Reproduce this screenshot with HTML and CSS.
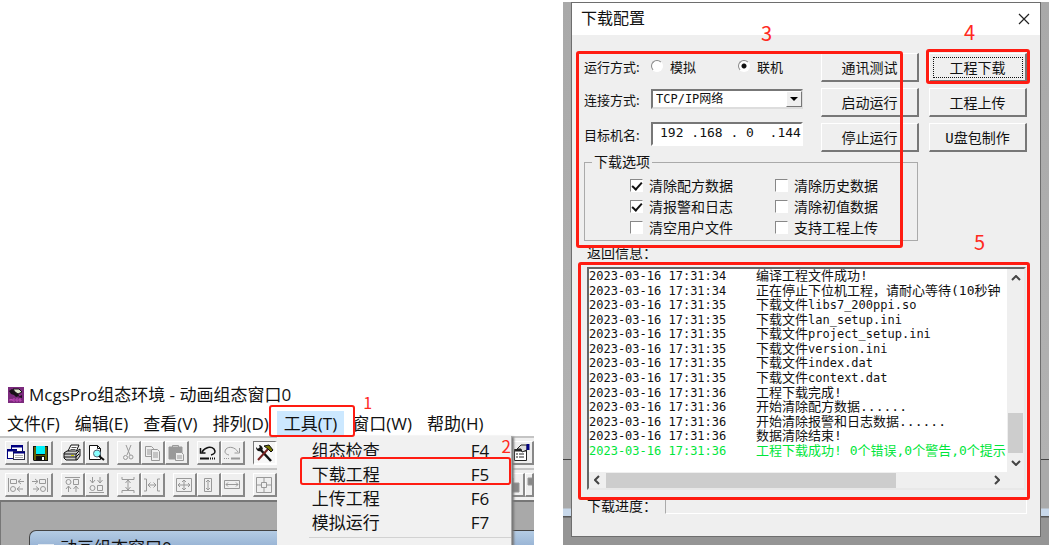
FILE: index.html
```html
<!DOCTYPE html>
<html lang="zh-CN">
<head>
<meta charset="utf-8">
<title>McgsPro组态环境</title>
<link rel="stylesheet" href="styles.css">
</head>
<body>
<main class="page">
<section class="app">
  <header class="app-title">
    <svg class="app-logo" width="18" height="18" viewBox="0 0 18 18"><rect x="1" y="1" width="16" height="16" fill="#7b2a7d"/><path d="M2 5 5 3 8 5 11 7 12 10 9 11 7 9 4 8Z" fill="#181018"/><path d="M6 3 12 3 15 6 11 8 8 6Z" fill="#dfe8cf" stroke="#181018"/><path d="M11 11 15 9V12Z" fill="#201020"/><path d="M3 15V13l1 1 1-1v2M8 13H6v2h2M11 13H9v2h2v-1M14 13h-2v1h2v1h-2" fill="none" stroke="#c048b8"/></svg>
    <h1>McgsPro组态环境 - 动画组态窗口0</h1>
  </header>
  <nav class="menubar">
    <button class="menu">文件(F)</button>
    <button class="menu">编辑(E)</button>
    <button class="menu">查看(V)</button>
    <button class="menu">排列(D)</button>
    <div class="menu-open">
      <button class="menu active">工具(T)</button>
      <span class="frame frame-1"></span><span class="mark mark-1">1</span>
      <div class="dropdown">
        <button class="item"><span>组态检查</span><span>F4</span></button>
        <button class="item"><span>下载工程</span><span>F5</span></button>
        <button class="item"><span>上传工程</span><span>F6</span></button>
        <button class="item"><span>模拟运行</span><span>F7</span></button>
        <hr>
        <span class="frame frame-2"></span><span class="mark mark-2">2</span>
      </div>
    </div>
    <button class="menu">窗口(W)</button>
    <button class="menu">帮助(H)</button>
  </nav>
  <div class="toolbar">
    <div class="group">
      <button class="tool" aria-label="窗口"><svg viewBox="0 0 20 20"><rect x="5.500" y="2.500" width="11" height="9" fill="#fff" stroke="#000080"/><path d="M5 3.500h12" stroke="#000080" stroke-width="2"/><rect x="1.500" y="6.500" width="9" height="9" fill="#fff" stroke="#000080"/><path d="M1 7.500h10" stroke="#000080" stroke-width="2"/><rect x="7.500" y="8.500" width="11" height="8" fill="#fff" stroke="#334"/><path d="M7 9.500h12" stroke="#000080" stroke-width="2"/><path d="M9 12.500h8M9 14.500h8" stroke="#aaa"/></svg></button>
      <button class="tool" aria-label="保存"><svg viewBox="0 0 20 20"><path d="M3 3h15v15H4l-1-1Z" fill="#111"/><path d="M4 4h2v8h9V4h2v13H4Z" fill="#606000"/><path d="M6 3h9v8H6Z" fill="#00f0f8"/><path d="M6 13h9v5H6Z" fill="#111"/><path d="M12 14h2v3h-2Z" fill="#fff"/></svg></button>
    </div>
    <div class="group">
      <button class="tool" aria-label="打印"><svg viewBox="0 0 20 20"><path d="M6 8 9 2h8l-3 7Z" fill="#fff" stroke="#111"/><path d="M9.500 4.500h5M8.500 6.500h5" stroke="#555"/><path d="M2 10 5 8h10l3-2v7l-3 4H4l-2-2Z" fill="#ccc" stroke="#111"/><path d="M2 11h12l3-3M2 14h12l3-3M14 11v6" fill="none" stroke="#111"/><path d="M9 12.500h3" stroke="#cc0"/></svg></button>
      <button class="tool" aria-label="打印预览"><svg viewBox="0 0 20 20"><path d="M3.500 2.500h8l3 3v11h-11Z" fill="#fff" stroke="#111"/><path d="M11.500 2.500v3h3" fill="none" stroke="#111"/><circle cx="11" cy="10.500" r="3.500" fill="#8ff" stroke="#567"/><path d="m13 13 5 4" stroke="#111" stroke-width="2"/></svg></button>
    </div>
    <div class="group gray">
      <button class="tool" aria-label="剪切"><svg viewBox="0 0 20 20"><path d="m8 2 4 10M13 2 9 12"/><circle cx="7.500" cy="14.500" r="2"/><circle cx="13" cy="14" r="2"/></svg></button>
      <button class="tool" aria-label="复制"><svg viewBox="0 0 20 20"><path d="M3.500 3.500h6l2 2v8h-8ZM5 7h4M5 9h4M5 11h4"/><path d="M9.500 6.500h6l2 2v9h-8Z" fill="#eee"/><path d="M11 10h5M11 12h5M11 14h5"/></svg></button>
      <button class="tool" aria-label="粘贴"><svg viewBox="0 0 20 20"><path d="M3 4h13v12H3Z" fill="#999"/><path d="M6.500 4.500v-2h6v2" /><path d="M9.500 9.500h6l2 2v6h-8Z" fill="#eee"/><path d="M11 13h5M11 15h5"/></svg></button>
    </div>
    <div class="group">
      <button class="tool" aria-label="撤销"><svg viewBox="0 0 20 20"><path d="M2.500 5v5h5M4 9c3-5 9-6 12-3 2 3 1 5-3 6" fill="none" stroke="#111" stroke-width="1.500"/><path d="M2 15.500h9" stroke="#111" stroke-width="2"/><path d="M12 15.500h6" stroke="#111" stroke-width="2" stroke-dasharray="1 1"/></svg></button>
      <button class="tool gray" aria-label="重做"><svg viewBox="0 0 20 20"><path d="M17.500 5v5h-5M16 9C13 4 7 3 4 6c-2 3-1 5 3 6"/><path d="M9 15.500h9" stroke-width="2"/><path d="M2 15.500h6" stroke-dasharray="1 1"/></svg></button>
    </div>
    <div class="group">
      <button class="tool pressed" aria-label="工具箱"><svg viewBox="0 0 20 20"><path d="m5 5 12 13" stroke="#111" stroke-width="2.500"/><path d="M2 4c0 3 2 5 5 4L9 6C8 3 7 2 5 2l1 3-2 1Z" fill="#111"/><path d="M4 17 14 6" stroke="#722" stroke-width="2"/><path d="m10 3 5-1 4 5-2 2-3-3Z" fill="#770" stroke="#111"/></svg></button>
    </div>
    <div class="group end">
      <button class="tool" aria-label="属性"><svg viewBox="0 0 20 20"><path d="M3.500 6.500h12v11h-12Z" fill="#fff" stroke="#222"/><path d="M3 7.500h13" stroke="#222" stroke-width="2"/><path d="M5 11h2M8 11h5M5 14h2M8 14h5" stroke="#222"/><path d="m6 6 4-4h6v5l-5 2-1-3Z" fill="#ddd" stroke="#222"/><path d="M17 1v6" stroke="#000080" stroke-width="3"/></svg></button>
    </div>
  </div>
  <div class="toolbar gray">
    <div class="group">
      <button class="tool" aria-label="左对齐"><svg viewBox="0 0 20 20"><path d="M2.500 3v14M4.500 4.500h6v4h-6ZM12 6.500h6M15 4l-3 2.500L15 9M11 14h6M14 11.500 11 14l3 2.500"/><circle cx="7" cy="14" r="2.500"/></svg></button>
      <button class="tool" aria-label="右对齐"><svg viewBox="0 0 20 20"><path d="M17.500 3v14M9.500 4.500h6v4h-6ZM2 6.500h6M5 4l3 2.500L5 9M3 14h6M6 11.500 9 14l-3 2.500"/><circle cx="13" cy="14" r="2.500"/></svg></button>
    </div>
    <div class="group">
      <button class="tool" aria-label="上对齐"><svg viewBox="0 0 20 20"><path d="M3 2.500h15M11.500 4.500h5v5h-5ZM6.500 17v-6M4 14l2.500-3L9 14M14 17v-6M11.500 14l2.500-3 2.500 3"/><circle cx="6.500" cy="7" r="2.500"/></svg></button>
      <button class="tool" aria-label="下对齐"><svg viewBox="0 0 20 20"><path d="M3 17.500h15M11.500 10.500h5v5h-5ZM6.500 2v6M4 5l2.500 3L9 5M14 2v6M11.500 5 14 8l2.500-3"/><circle cx="6.500" cy="13" r="2.500"/></svg></button>
    </div>
    <div class="group">
      <button class="tool" aria-label="纵向等间距"><svg viewBox="0 0 20 20"><path d="M4 2v2.500h12V2M4 18v-2.500h12V18M10 5v10M7.500 8 10 5l2.500 3M7.500 12l2.500 3 2.500-3"/></svg></button>
      <button class="tool" aria-label="横向等间距"><svg viewBox="0 0 20 20"><path d="M2 4h2.500v12H2M18 4h-2.500v12H18M6 10h8M8.500 7.500 6 10l2.500 2.500M11.500 7.500 14 10l-2.500 2.500"/></svg></button>
    </div>
    <div class="group">
      <button class="tool" aria-label="等大小"><svg viewBox="0 0 20 20"><path d="M2.500 3.500h15v13h-15ZM10 5v10M4 10h12M8 7l2-2 2 2M8 13l2 2 2-2M6 8l-2 2 2 2M14 8l2 2-2 2"/></svg></button>
      <button class="tool" aria-label="等高"><svg viewBox="0 0 20 20"><path d="M6.500 3.500h7v13h-7ZM10 5v10M8 7l2-2 2 2M8 13l2 2 2-2"/></svg></button>
      <button class="tool" aria-label="等宽"><svg viewBox="0 0 20 20"><path d="M2.500 5.500h15v8h-15ZM4 9.500h12M6 7.500l-2 2 2 2M14 7.500l2 2-2 2"/></svg></button>
    </div>
    <div class="group">
      <button class="tool" aria-label="居中"><svg viewBox="0 0 20 20"><path d="M2.500 2.500h15v15h-15ZM7.500 7.500h5v5h-5ZM10 3v4M10 13v4M3 10h4M13 10h4"/></svg></button>
    </div>
    <div class="group end">
      <button class="tool" aria-label="层次"><svg viewBox="0 0 20 20"><path d="M2 3h9v9H2Z" fill="#bbb"/><path d="M9 8h8v9H9Z" fill="#888"/></svg></button>
      <button class="tool half" aria-label="前移"><svg viewBox="0 0 20 20"><path d="M2 3h7v7H2Z" fill="#888"/></svg></button>
    </div>
  </div>
  <div class="workspace">
    <div class="child"><span class="child-icon"></span>动画组态窗口0</div>
  </div>
</section>

<section class="backdrop">
  <div class="dialog">
    <header class="dialog-title">
      <h2>下载配置</h2>
      <button class="close" aria-label="关闭"><svg width="12" height="12" viewBox="0 0 12 12"><path d="m1 1 10 10M11 1 1 11" stroke="#222" stroke-width="1.200" fill="none"/></svg></button>
    </header>
    <form class="dialog-body">
      <div class="top">
        <div class="fields">
          <div class="field"><span class="label">运行方式:</span>
            <label class="radio"><input type="radio" name="mode">模拟</label>
            <label class="radio second"><input type="radio" name="mode" checked>联机</label>
          </div>
          <div class="field"><label class="label" for="link">连接方式:</label>
            <div class="combo"><select id="link"><option>TCP/IP网络</option></select><span class="arrow"><svg width="8" height="4" viewBox="0 0 8 4"><path d="M0 0h8L4 4Z"/></svg></span></div>
          </div>
          <div class="field tall"><label class="label" for="host">目标机名:</label><input class="host" id="host" type="text" value="192 .168 . 0  .144"></div>
        </div>
        <div class="buttons">
          <button type="button">通讯测试</button>
          <button type="button">启动运行</button>
          <button type="button">停止运行</button>
        </div>
        <div class="buttons">
          <div class="primary"><button type="button" class="focused">工程下载</button><span class="frame frame-4"></span><span class="mark mark-4">4</span></div>
          <button type="button">工程上传</button>
          <button type="button">U盘包制作</button>
        </div>
      </div>
      <fieldset>
        <legend>下载选项</legend>
        <div class="checks">
          <label><input type="checkbox" checked>清除配方数据</label>
          <label><input type="checkbox">清除历史数据</label>
          <label><input type="checkbox" checked>清报警和日志</label>
          <label><input type="checkbox">清除初值数据</label>
          <label><input type="checkbox">清空用户文件</label>
          <label><input type="checkbox">支持工程上传</label>
        </div>
      </fieldset>
      <span class="frame frame-3"></span><span class="mark mark-3">3</span>
      <div class="log-label">返回信息：</div>
      <div class="log-wrap">
        <div class="log">
          <ol class="rows">
            <li><time>2023-03-16 17:31:34</time><span>编译工程文件成功!</span></li>
            <li><time>2023-03-16 17:31:34</time><span>正在停止下位机工程，请耐心等待(10秒钟</span></li>
            <li><time>2023-03-16 17:31:35</time><span>下载文件<code>libs7_200ppi.so</code></span></li>
            <li><time>2023-03-16 17:31:35</time><span>下载文件<code>lan_setup.ini</code></span></li>
            <li><time>2023-03-16 17:31:35</time><span>下载文件<code>project_setup.ini</code></span></li>
            <li><time>2023-03-16 17:31:35</time><span>下载文件<code>version.ini</code></span></li>
            <li><time>2023-03-16 17:31:35</time><span>下载文件<code>index.dat</code></span></li>
            <li><time>2023-03-16 17:31:35</time><span>下载文件<code>context.dat</code></span></li>
            <li><time>2023-03-16 17:31:36</time><span>工程下载完成!</span></li>
            <li><time>2023-03-16 17:31:36</time><span>开始清除配方数据......</span></li>
            <li><time>2023-03-16 17:31:36</time><span>开始清除报警和日志数据......</span></li>
            <li><time>2023-03-16 17:31:36</time><span>数据清除结束!</span></li>
            <li class="ok"><time>2023-03-16 17:31:36</time><span>工程下载成功! 0个错误,0个警告,0个提示</span></li>
          </ol>
          <div class="vbar"><svg width="10" height="6" viewBox="0 0 10 6"><path d="m1 5 4-4 4 4"/></svg><span class="vthumb"></span><svg width="10" height="6" viewBox="0 0 10 6"><path d="m1 1 4 4 4-4"/></svg></div>
          <div class="hbar"><svg width="6" height="10" viewBox="0 0 6 10"><path d="M5 1 1 5l4 4"/></svg><span class="htrack"><span class="hthumb"></span></span><svg width="6" height="10" viewBox="0 0 6 10"><path d="m1 1 4 4-4 4"/></svg></div>
        </div>
        <span class="frame frame-5"></span><span class="mark mark-5">5</span>
      </div>
      <div class="progress"><span>下载进度：</span><div class="bar"></div></div>
    </form>
  </div>
</section>
</main>
</body>
</html>
```

FILE: styles.css
```css
* { box-sizing: border-box; }
body { margin: 0; background: #fff; color: #111; font-family: "Open Sans", "Noto Sans CJK SC", sans-serif; }
button, input, select { font: inherit; color: inherit; margin: 0; }
h1, h2 { margin: 0; font-weight: 400; }
.page { display: grid; grid-template-columns: minmax(0, 534fr) minmax(0, 486fr); gap: 29px; min-height: 100vh; padding-right: 2px; overflow: hidden; }

.frame { position: absolute; border: 2px solid #ff1c12; border-radius: 3px; pointer-events: none; z-index: 3; }
.mark { position: absolute; color: #ff2a1e; font-size: 20px; line-height: 20px; z-index: 3; font-family: "Noto Sans CJK SC", sans-serif; }

/* Editor window */
.app { display: flex; flex-direction: column; justify-content: flex-end; font-size: 17px; overflow: hidden; }
.app-title { display: flex; align-items: center; gap: 4px; height: 30px; padding-left: 7px; }
.app-title h1 { font-size: 17px; line-height: 24px; }
.menubar { display: flex; gap: 1px; height: 26px; }
.menu { height: 24px; margin-top: 1px; padding: 1px 7px 0; border: 0; background: none; line-height: 23px; white-space: nowrap; }
.active { background: #cce8ff; }
.menu-open { position: relative; }
.frame-1 { inset: -5px -11px -1px -8px; }
.mark-1 { right: -28px; top: -16px; font-size: 16px; line-height: 16px; }
.dropdown { position: absolute; left: 0; top: 26px; width: 235px; height: 130px; padding-top: 3px; background: #f1f1f1; border-right: 1px solid #aaa; box-shadow: 2px 1px 2px #777; z-index: 2; }
.item { display: grid; grid-template-columns: 1fr 40px; width: 100%; height: 24px; padding: 0 0 0 35px; border: 0; background: none; text-align: left; line-height: 24px; }
.dropdown hr { margin: 2px 0 0 32px; border: 0; border-top: 1px solid #d2d2d2; }
.frame-2 { left: 23px; right: 0; top: 21px; height: 28px; }
.mark-2 { right: 0; top: 0; font-size: 17px; }

.toolbar { display: flex; gap: 8px; height: 32px; padding: 3px 0 3px 5px; background: #f0f0f0; border-top: 2px solid #c4c4c4; }
.group { display: flex; }
.end { margin-left: auto; }
.tool { width: 24px; height: 24px; padding: 0; border: 1px solid #fff; border-right: 2px solid #888; border-bottom: 2px solid #888; background: #efefef; }
.tool svg { display: block; width: 20px; height: 20px; }
.pressed { border-color: #777 #fff #fff #777; background: #f7f7f7; }
.half { width: 9px; overflow: hidden; }
.gray svg { fill: none; stroke: #999; }
.workspace { height: 45px; padding: 28px 0 0 28px; border-top: 2px solid #777; border-left: 1px solid #777; background: #a9a9a9; overflow: hidden; }
.child { display: flex; gap: 6px; height: 40px; padding: 5px 0 0 8px; border: 1px solid #444; border-right: 0; border-radius: 7px 0 0 0; background: linear-gradient(#b4cce4, #9bb6d6 14px); line-height: 24px; }
.child-icon { width: 16px; height: 16px; margin-top: 8px; background: #e4ebf2; }

/* Download dialog */
.backdrop { padding: 2px 8px 8px; background: linear-gradient(#fff 2px, #a9a9a9 2px, #b2b2b2 459px, #444 459px, #444 460px, #aaa 460px, #aaa 508px, #c8d8ea 509px, #c8d8ea 516px, #555 516px, #555 517px, #959595 518px); }
.dialog { border: 1px solid #6e6e6e; background: #efefef; font-family: "DejaVu Sans Mono", "Noto Sans CJK SC", monospace; font-size: 14px; }
.dialog-title { display: flex; align-items: center; justify-content: space-between; height: 32px; padding: 0 10px 0 9px; background: #fff; }
.dialog-title h2 { font-size: 16px; line-height: 24px; }
.close { padding: 0; border: 0; background: none; line-height: 0; }
.dialog-body { position: relative; padding: 18px 13px 22px 12px; }
.top { display: grid; grid-template-columns: minmax(0, 1fr) 98px 98px; padding-right: 10px; }
.fields { display: flex; flex-direction: column; gap: 13px; padding: 3px 18px 0 0; }
.buttons { display: flex; flex-direction: column; gap: 6px; }
.buttons + .buttons { margin-left: 10px; margin-right: -10px; }
.buttons button { width: 100%; height: 29px; padding: 1px 0 0; border: 1px solid #fff; border-right: 2px solid #777; border-bottom: 2px solid #777; background: #efefef; line-height: 24px; }
.primary { position: relative; height: 29px; }
.buttons .focused { outline: 1px dotted #111; outline-offset: -5px; }
.field { display: flex; align-items: center; height: 20px; }
.tall { height: 24px; }
.label { flex: none; width: 67px; font-size: 13px; font-family: "Noto Sans CJK SC", sans-serif; }
.radio { display: flex; align-items: center; gap: 7px; white-space: nowrap; font-size: 13px; }
.second { margin-left: 42px; }
.radio input { appearance: none; width: 12px; height: 12px; border: 1px solid; border-color: #888 #fff #fff #888; border-radius: 50%; background: #fff; }
.radio input:checked { background: radial-gradient(#111 2px, #fff 3px); }
.combo { position: relative; flex: 1; height: 20px; }
.combo select { appearance: none; width: 100%; height: 20px; padding: 0 0 0 3px; border: 2px solid; border-color: #777 #ddd #ddd #777; border-radius: 0; background: #fff; font-size: 12px; line-height: 16px; }
.arrow { position: absolute; right: 1px; top: 2px; display: grid; place-items: center; width: 16px; height: 16px; border: 1px solid; border-color: #fff #777 #777 #fff; background: #efefef; pointer-events: none; }
.host { flex: 1; min-width: 0; height: 24px; padding: 0 0 3px 7px; border: 2px solid; border-color: #777 #fff #fff #777; background: #fff; font-size: 13px; }

fieldset { min-width: 0; margin: 2px 109px 0 0; padding: 5px 0 2px; border: 1px solid #aaa; }
legend { margin-left: 7px; padding: 0 2px; line-height: 16px; }
.checks { display: grid; grid-template-columns: 145px auto; grid-auto-rows: 21px; padding-left: 45px; }
.checks label { display: flex; align-items: center; gap: 6px; line-height: 20px; white-space: nowrap; }
.checks input { position: relative; appearance: none; width: 13px; height: 13px; border: 1px solid; border-color: #888 #fff #fff #888; background: #fff; }
.checks input:checked::after { content: ""; position: absolute; left: 3px; top: 0; width: 4px; height: 8px; border: solid #111; border-width: 0 2px 2px 0; transform: rotate(42deg); }

.log-label { margin: 4px 0 0 3px; line-height: 16px; }
.log-wrap { position: relative; margin: 6px 1px 0 3px; }
.log { display: grid; grid-template-columns: minmax(0, 1fr) 17px; border: 2px solid; border-color: #666 #e8e8e8 #e8e8e8 #666; background: #efefef; }
.rows { display: grid; grid-template-rows: repeat(13, 1fr); height: 203px; margin: 0; padding: 0 0 14px; overflow: hidden; list-style: none; background: #fff; font-size: 13px; }
.rows li { display: grid; grid-template-columns: 167px auto; align-items: center; line-height: 14px; white-space: nowrap; }
.rows time, .rows code { font-family: "DejaVu Sans Mono", monospace; font-size: 12px; }
.rows .ok { color: #00e63a; }
.vbar { display: flex; flex-direction: column; align-items: center; justify-content: space-between; padding: 6px 0; }
.vbar svg, .hbar svg { flex: none; fill: none; stroke: #444; stroke-width: 2; }
.vthumb { width: 15px; height: 40px; margin-top: auto; margin-bottom: 7px; background: #cdcdcd; }
.hbar { grid-column: 1 / -1; display: flex; align-items: center; gap: 6px; height: 16px; padding: 0 24px 0 5px; }
.htrack { flex: 1; height: 15px; }
.hthumb { display: block; width: 76%; height: 15px; background: #cdcdcd; }
.progress { display: flex; align-items: center; margin: 8px 0 0 3px; line-height: 16px; }
.progress span { width: 78px; }
.bar { flex: 1; height: 16px; border: 1px solid; border-color: #aaa #fff #fff #aaa; }

.frame-3 { left: 4px; right: 137px; top: 16px; height: 197px; border-width: 3px; }
.mark-3 { left: 189px; top: -12px; }
.frame-4 { inset: -4px -3px -2px; border-width: 3px; }
.mark-4 { left: 35px; top: -31px; }
.frame-5 { inset: -5px -4px -10px -9px; border-width: 3px; }
.mark-5 { right: 41px; top: -35px; }
```
